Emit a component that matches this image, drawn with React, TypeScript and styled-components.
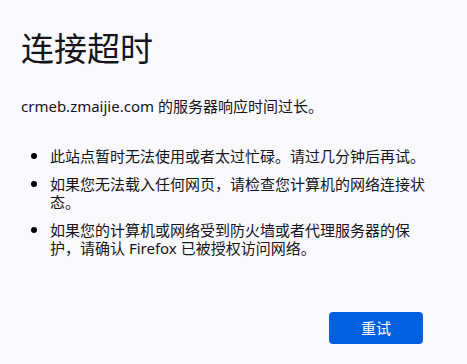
import styled, { createGlobalStyle } from "styled-components";

const GlobalStyle = createGlobalStyle`
  html, body {
    margin: 0;
    padding: 0;
    background: #f9f9fb;
  }

  body {
    color: #15141a;
    font-family: "Noto Sans", "Noto Sans CJK SC", sans-serif;
    font-size: 15px;
    line-height: 18.5px;
  }
`;

const Page = styled.main`
  box-sizing: border-box;
  width: 430px;
  min-height: 364px;
  padding: 28px 0 0 21px;
`;

const Title = styled.h1`
  margin: 0 0 29px;
  font-family: "Noto Sans CJK SC", sans-serif;
  font-size: 33px;
  font-weight: 400;
  line-height: 39.6px;
`;

const Intro = styled.p`
  margin: 0 0 32px;
`;

const Reasons = styled.ul`
  display: grid;
  gap: 9px;
  margin: 0;
  padding-left: 29px;
  list-style: disc;
`;

const Reason = styled.li`
  padding: 0;

  &::marker {
    font-size: 17px;
    color: #000;
  }
`;

const ButtonRow = styled.div`
  display: flex;
  justify-content: flex-end;
  padding: 54px 7px 0 0;
`;

const RetryButton = styled.button`
  width: 94px;
  height: 32px;
  border: none;
  border-radius: 4px;
  background: #0061e0;
  color: #fff;
  font-family: "Noto Sans CJK SC", sans-serif;
  font-size: 15px;
  cursor: pointer;
`;

export default function App() {
  return (
    <>
      <GlobalStyle />
      <Page>
        <Title>连接超时</Title>
        <Intro>crmeb.zmaijie.com 的服务器响应时间过长。</Intro>
        <Reasons>
          <Reason>此站点暂时无法使用或者太过忙碌。请过几分钟后再试。</Reason>
          <Reason>如果您无法载入任何网页，请检查您计算机的网络连接状态。</Reason>
          <Reason>
            如果您的计算机或网络受到防火墙或者代理服务器的保护，请确认 Firefox 已被授权访问网络。
          </Reason>
        </Reasons>
        <ButtonRow>
          <RetryButton>重试</RetryButton>
        </ButtonRow>
      </Page>
    </>
  );
}
